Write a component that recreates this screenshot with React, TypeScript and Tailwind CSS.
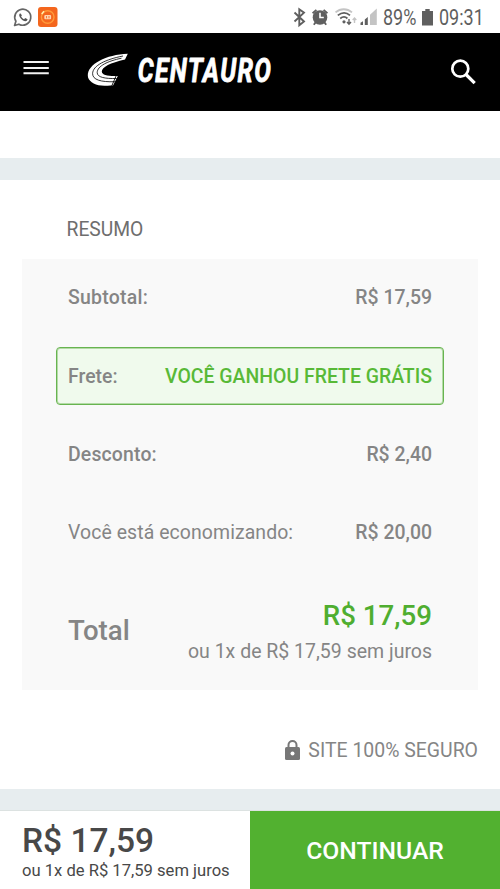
import React from "react";

const rows = [
  { label: "Desconto:", value: "R$ 2,40", strong: true },
  { label: "Você está economizando:", value: "R$ 20,00", strong: false },
];

function StatusBar() {
  return (
    <div className="flex h-[33px] items-center justify-between bg-white text-[#5f5f5f]">
      <svg width="64" height="33" viewBox="0 0 64 33" fill="none">
        <path
          d="M14.600 25.500l1.300-4.200a8 8 0 1 1 3 2.900z"
          stroke="#666"
          strokeWidth="1.700"
          strokeLinejoin="round"
        />
        <path
          d="M20.200 13.200c-1.200.8-1.300 2.300-.3 4 1.400 2.300 3.200 3.700 5.200 4 1.300.1 2.200-.6 2.500-1.900l-2.400-1.300-1.100 1.200c-1.400-.6-2.400-1.600-3-2.900l.9-1.100z"
          fill="#555"
        />
        <rect x="38" y="7" width="19.500" height="20" rx="3" fill="#f4661d" />
        <circle cx="47.700" cy="17" r="6.300" stroke="#ff9a3a" strokeWidth="1.400" />
        <path d="M41.700 14l2.300-2.800" stroke="#fff3b0" strokeWidth="1.500" />
        <rect x="44.300" y="15" width="6.800" height="4.200" rx="1" fill="#ffd3ae" />
        <path d="M46.500 16v2.300M49 16v2.300" stroke="#f4661d" strokeWidth=".8" />
      </svg>

      <div className="flex h-full w-[208px] items-center">
        <svg width="91" height="33" viewBox="292 0 91 33" fill="none" className="shrink-0">
          <path
            d="M294.500 12.500l9.500 9-4.700 3.700V9.300l4.700 3.400-9.500 8.800"
            stroke="#5f5f5f"
            strokeWidth="1.900"
          />
          <circle cx="320" cy="17.500" r="7.300" fill="#5f5f5f" />
          <path
            d="M312.600 13.200l3.800-3.300M327.400 13.200l-3.800-3.300M315.500 22.500l-1.700 2.300M324.500 22.500l1.700 2.300"
            stroke="#5f5f5f"
            strokeWidth="1.900"
          />
          <path d="M320 12.800v4.700h3.800" stroke="#fff" strokeWidth="1.600" />
          <path d="M335.500 12.400c5-4.200 11.500-4.200 16.500 0" stroke="#c4c4c4" strokeWidth="1.800" />
          <path
            d="M337.800 15.400c4-3.200 8.600-3.200 12.200 0M340.200 18.500c2.500-2 5.200-2 7.200 0"
            stroke="#5f5f5f"
            strokeWidth="1.800"
          />
          <circle cx="344" cy="21.800" r="1.600" fill="#5f5f5f" />
          <path d="M349 19v5M347 22l2 2.300 2-2.300" stroke="#5f5f5f" strokeWidth="1.400" />
          <path d="M354.500 23v-5M352.700 20l1.800-2 1.800 2" stroke="#c4c4c4" strokeWidth="1.400" />
          <path d="M360.500 25v-2.200l2.500-1.600V25zM364.800 25v-5.500l3-2.600V25z" fill="#5f5f5f" />
          <path d="M370 25V14.800l6.800-6.300V25z" fill="#c4c4c4" />
        </svg>
        <div className="w-[38px] shrink-0 pt-[6px]">
          <span className="inline-block origin-left scale-x-[0.850] text-[21.200px] leading-none">
            89%
          </span>
        </div>
        <svg width="18" height="33" viewBox="421 0 18 33" className="shrink-0">
          <path d="M422 11h3.300V9h4.400v2h3.300v14.400h-11z" fill="#5f5f5f" />
        </svg>
        <div className="shrink-0 pt-[6px]">
          <span className="inline-block origin-left scale-x-[0.850] text-[21.200px] leading-none">
            09:31
          </span>
        </div>
      </div>
    </div>
  );
}

function Header() {
  return (
    <header className="flex h-[78px] items-center justify-between bg-black">
      <svg width="280" height="78" viewBox="0 33 280 78" fill="none" role="img">
        <path d="M23.500 62h25.300M23.500 68h25.300M23.500 73.200h25.300" stroke="#f2f2f2" strokeWidth="2" />
        <path
          d="M127.800 53.700C106 54.500 87.800 64 87.800 75.500c0 5.200 6 9.600 13.500 10 4 .3 7.500.3 11.700.1l4.800-9.600c-9 .4-16-.7-16-4.500 0-4.300 8.500-8.700 23.200-12z"
          fill="#fff"
        />
        <path
          d="M123 56C106 59.300 92.600 65.500 92.600 73.700c0 6 8 8.500 22.400 8M121.500 58.200C108 61 97.200 66 97.200 72.600c0 4.700 7.500 6.200 19.500 5.900"
          stroke="#000"
          strokeWidth=".8"
        />
        <path d="M116.500 75l-5 11.500" stroke="#000" strokeWidth=".9" />
        <text
          x="0"
          y="0"
          transform="translate(137.800 81.800) scale(.735 1)"
          fill="#fff"
          stroke="#fff"
          strokeWidth=".9"
          strokeLinejoin="round"
          fontSize="33.800"
          fontWeight="700"
          fontStyle="italic"
          textLength="181"
        >
          CENTAURO
        </text>
      </svg>
      <svg width="50" height="78" viewBox="450 33 50 78" fill="none">
        <circle cx="460.300" cy="68.700" r="8" stroke="#fff" strokeWidth="2.700" />
        <path d="M466 74.500l8.700 8.700" stroke="#fff" strokeWidth="3.200" />
      </svg>
    </header>
  );
}

function Summary() {
  return (
    <section className="h-[609px] px-[22px] pt-[36px]">
      <h2 className="pl-[44.500px] text-[19.300px] leading-[28px] text-[#6e6e6e]">RESUMO</h2>
      <div className="mt-[15px] h-[431px] bg-[#f9f9f9] px-[33px] text-[19.460px] text-[#858585]">
        <div className="flex h-[78px] items-center justify-between px-[13px] font-medium">
          <span className="tracking-[0.250px]">Subtotal:</span>
          <span>R$ 17,59</span>
        </div>
        <div className="mx-px mt-[10px] flex h-[58px] items-center justify-between rounded-[4px] border border-[#68b450] bg-[#f0faed] px-[11px] pt-px font-medium shadow-[inset_0_0_0_1px_#b4dba7]">
          <span>Frete:</span>
          <span className="text-[#58b937]">VOCÊ GANHOU FRETE GRÁTIS</span>
        </div>
        <div className="mt-[11px]">
          {rows.map((row) => (
            <div key={row.label} className="flex h-[78px] items-center justify-between px-[13px]">
              <span className={row.strong ? "font-medium tracking-[0.150px]" : "tracking-[0.080px]"}>
                {row.label}
              </span>
              <span className="font-medium">{row.value}</span>
            </div>
          ))}
        </div>
        <div className="mt-[2px] flex items-start justify-between px-[13px] pt-[24px]">
          <span className="pt-[15px] text-[27.600px] leading-[36px] font-medium">Total</span>
          <div className="text-right">
            <div className="text-[27.700px] leading-[36px] font-medium text-[#4fae30]">R$ 17,59</div>
            <div className="text-[19.500px] leading-[36px]">ou 1x de R$ 17,59 sem juros</div>
          </div>
        </div>
      </div>
      <div className="mt-[47px] flex items-center justify-end gap-[7px] text-[19.460px] leading-[28px] text-[#858585]">
        <svg width="17" height="22" viewBox="0 0 17 22" fill="none">
          <path d="M4.500 9V5a4 4 0 0 1 8 0V9" stroke="#777" strokeWidth="2" />
          <rect x="1" y="7" width="15" height="13" rx="1.500" fill="#777" />
          <circle cx="8.500" cy="13.500" r="2" fill="#fff" />
        </svg>
        <span>SITE 100% SEGURO</span>
      </div>
    </section>
  );
}

function Footer() {
  return (
    <footer className="flex h-[78px]">
      <div className="w-1/2 bg-white pt-[10px] pl-[22px] text-[#484848]">
        <div className="text-[33.500px] leading-[40px] font-medium">R$ 17,59</div>
        <div className="text-[16.600px] leading-[20px] whitespace-nowrap">ou 1x de R$ 17,59 sem juros</div>
      </div>
      <button className="w-1/2 bg-[#52b130] pt-[2px] text-[24.700px] font-medium text-white">
        CONTINUAR
      </button>
    </footer>
  );
}

export default function App() {
  return (
    <div className="h-[889px] w-[500px] overflow-hidden bg-white font-['Roboto',sans-serif]">
      <StatusBar />
      <Header />
      <div className="h-[47px]" />
      <div className="h-[22px] bg-[#e7edef]" />
      <Summary />
      <div className="h-[22px] border-b border-[#dce2e1] bg-[#e7edef]" />
      <Footer />
    </div>
  );
}
